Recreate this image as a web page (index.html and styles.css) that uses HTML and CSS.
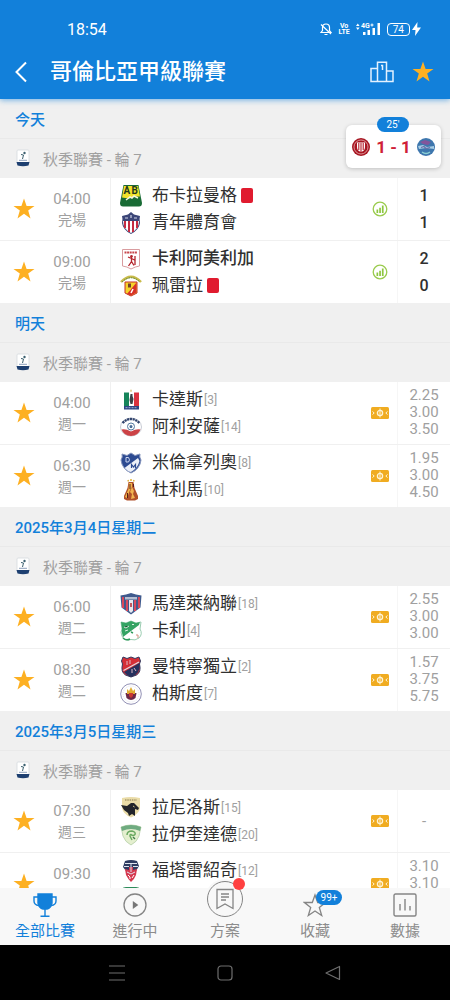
FILE: index.html
```html
<!DOCTYPE html>
<html lang="zh-TW">
<head>
    <meta charset="UTF-8">
    <meta name="viewport" content="width=device-width, initial-scale=1.0">
    <title>哥倫比亞甲級聯賽</title>
    <link rel="stylesheet" href="styles.css">
</head>
<body>
    <!-- Iconos compartidos -->
    <svg class="sprite" aria-hidden="true">
        <symbol id="star" viewBox="0 0 22 22">
            <path fill="#fdb022" d="M11 .5l2.600 7.400h7.900l-6.300 4.700 2.300 7.900L11 15.800l-6.500 4.700 2.300-7.900L.5 7.900h7.900z"/>
        </symbol>
        <symbol id="league" viewBox="0 0 16 18">
            <rect x="2" y="1" width="12" height="13" rx="1" fill="#fff" stroke="#d4d9dd" stroke-width=".8"/>
            <circle cx="9.500" cy="4" r="1.200" fill="#3c6170"/>
            <path d="M6 5.500l2.500.5-1 4" fill="none" stroke="#3c6170"/>
            <path d="M1.500 13h13l-1 3.500q-5.500 1.400-11 0z" fill="#1d3f70"/>
            <path d="M4 11.300h8" stroke="#6f86a8" stroke-width=".8"/>
        </symbol>
        <symbol id="stats" viewBox="0 0 16 16">
            <circle cx="8" cy="8" r="6.800" fill="none" stroke="#9acb4d" stroke-width="1.300"/>
            <path d="M4.500 8.500h1.700V12H4.500zM7.200 6.800h1.700V12H7.200zM9.900 4.500h1.700V12H9.900z" fill="#8dc63f"/>
        </symbol>
        <symbol id="field" viewBox="0 0 18 14">
            <rect x="0" y="1" width="18" height="12" rx="1.500" fill="#f0ac21"/>
            <circle cx="9" cy="7" r="2.600" fill="none" stroke="#fff4d6" stroke-width="1.300"/>
            <path d="M9 2.500v9M1.500 5.500L3.200 7 1.500 8.500M16.500 5.500L14.800 7l1.700 1.500" fill="none" stroke="#fff4d6"/>
        </symbol>
    </svg>

    <header class="header">
        <div class="status-bar">
            <span class="clock">18:54</span>
            <div class="status-icons">
                <svg width="12" height="14" viewBox="0 0 12 14" fill="none" stroke="#fff" stroke-width="1.200">
                    <path d="M1 10.500h10L9.500 8.500V5.500a3.500 3.500 0 0 0-7 0v3zM4.500 12.500h3M1 2.500l10 9.500"/>
                </svg>
                <span class="volte"><span>Vo</span><span>LTE</span></span>
                <svg width="25" height="14" viewBox="0 0 25 14" fill="#fff">
                    <path d="M0 4l1.800-2.500L3.600 4zM0 5.500h3.600L1.800 8z"/>
                    <text x="5" y="6" font-size="7" font-weight="700">4G</text>
                    <path d="M14.500 2.500h3v1h-3zM15.500 1.500h1v3h-1z"/>
                    <path d="M7 10h2.500v3H7zM11.500 8h2.500v5h-2.500zM16.500 6H19v7h-2.500zM21.500 1H24v12h-2.500z"/>
                </svg>
                <span class="battery">74</span>
                <svg width="9" height="14" viewBox="0 0 9 14" fill="#fff">
                    <path d="M5.500 0L0 8h3.500L3 14l6-8.500H5.200z"/>
                </svg>
            </div>
        </div>
        <div class="title-bar">
            <button class="icon-button back" aria-label="返回">
                <svg width="14" height="22" viewBox="0 0 14 22" fill="none" stroke="#fff" stroke-width="2">
                    <path d="M12 1.500L2.500 11 12 20.500"/>
                </svg>
            </button>
            <h1>哥倫比亞甲級聯賽</h1>
            <button class="icon-button" aria-label="排名">
                <svg width="24" height="22" viewBox="0 0 24 22" fill="none" stroke="#e3f1ff" stroke-width="1.500">
                    <path d="M7.500 20.500V1.200h9v19.300M7.500 7.500H1v13h22V10h-6.500M11 4.500h1.500V9"/>
                </svg>
            </button>
            <button class="icon-button" aria-label="收藏">
                <svg width="22" height="22"><use href="#star"/></svg>
            </button>
        </div>
    </header>

    <main class="content">
        <a href="#" class="live-card">
            <span class="live-minute">25'</span>
            <svg width="18" height="18" viewBox="0 0 18 18">
                <circle cx="9" cy="9" r="9" fill="#a71622"/>
                <circle cx="9" cy="9" r="7" fill="none" stroke="#e9b4b4" stroke-width=".8"/>
                <path d="M5 4.500h8V9q0 4-4 5-4-1-4-5z" fill="#fff"/>
                <path d="M6.800 5v7M9 5v9M11.200 5v7" stroke="#b81d2a" stroke-width="1.100"/>
            </svg>
            <span class="live-score">1 - 1</span>
            <svg width="18" height="18" viewBox="0 0 18 18">
                <circle cx="9" cy="9" r="9" fill="#3e77ae"/>
                <path d="M3 4l5-2 6 2-3 3-5-1z" fill="#83559b"/>
                <path d="M1 8l5-1 4 2 7-1v3l-8-1-7 1z" fill="#a7cde5"/>
                <path d="M4 9.500l3-1 2 2 4-1" fill="none" stroke="#6a6fa8" stroke-width="1.200"/>
                <path d="M5 14q4 3 8 0" fill="none" stroke="#8bd0d4" stroke-width="1.500"/>
            </svg>
        </a>

        <section>
            <h2 class="date">今天</h2>
            <h3 class="league"><svg width="16" height="18"><use href="#league"/></svg>秋季聯賽 - 輪 7</h3>
            <div class="match">
                <button class="favorite" aria-label="收藏"><svg width="22" height="22"><use href="#star"/></svg></button>
                <div class="time"><span>04:00</span><span class="day">完場</span></div>
                <div class="teams">
                    <div class="team">
                        <svg width="22" height="22" viewBox="0 0 22 22">
                            <path d="M3.500 0h15L22 18q0 3.500-3 3.500H3q-3 0-3-3.500z" fill="#196b35"/>
                            <path d="M4 1h14l2 10.500q-3 0-5 0L9 13.500l-7-1z" fill="#f3e32b"/>
                            <path d="M6 15l4-3 2 1 2-2 4 2" fill="none" stroke="#f4f5e0" stroke-width="1.500"/>
                            <text x="3.500" y="9" font-size="10" font-weight="700" fill="#24391d">A</text>
                            <text x="11.500" y="9" font-size="10" font-weight="700" fill="#24391d">B</text>
                        </svg>
                        <span class="name">布卡拉曼格</span><i class="red-card"></i>
                    </div>
                    <div class="team">
                        <svg width="22" height="22" viewBox="0 0 22 22">
                            <path d="M11 0l3 2.500L20 4q-1 3 0 7-1 7-9 11-8-4-9-11 1-4 0-7l6-1.500z" fill="#3c4678"/>
                            <path d="M3 9h16q0 8-8 12-8-4-8-12z" fill="#fff"/>
                            <path d="M5 9v7M9 9v11M13 9v11M17 9v7" stroke="#c52c43" stroke-width="2"/>
                            <path d="M5 6h3M14 6h3M11 3v3" stroke="#d2d6e8" stroke-width="1.200"/>
                        </svg>
                        <span class="name">青年體育會</span>
                    </div>
                </div>
                <div class="info"><svg width="16" height="16"><use href="#stats"/></svg></div>
                <div class="score"><span>1</span><span>1</span></div>
            </div>
            <div class="match">
                <button class="favorite" aria-label="收藏"><svg width="22" height="22"><use href="#star"/></svg></button>
                <div class="time"><span>09:00</span><span class="day">完場</span></div>
                <div class="teams">
                    <div class="team">
                        <svg width="22" height="22" viewBox="0 0 22 22">
                            <path d="M2.500 1.500h17V18q-4 .5-8.500 3-4-2.500-8.500-3z" fill="#fff" stroke="#d99c9f"/>
                            <path d="M4.500 4.500h13" stroke="#c7484d" stroke-width="2" stroke-dasharray="2 .6"/>
                            <circle cx="11.500" cy="8.200" r="1.300" fill="#b3242b"/>
                            <path d="M11.500 9v4.500l-3 4.500M11.500 13.500l2.500 4M8 9l3.500 1.500 3 1.500M15 8v9" fill="none" stroke="#b3242b" stroke-width="1.300"/>
                        </svg>
                        <span class="name winner">卡利阿美利加</span>
                    </div>
                    <div class="team">
                        <svg width="22" height="22" viewBox="0 0 22 22">
                            <path d="M1 7Q11-3.500 21 7" fill="none" stroke="#c9bb4a" stroke-width="2.500"/>
                            <path d="M2 7Q11-1.500 20 7" fill="none" stroke="#56823a" stroke-dasharray="1.500 1"/>
                            <path d="M5 7h12v11l-6 3-6-3z" fill="#f5d32a" stroke="#c43227"/>
                            <path d="M16.500 7.500L7 19l4 1.500 5.500-3z" fill="#d83127"/>
                            <path d="M8 8.500h3v4H8z" fill="#74402b"/>
                            <path d="M13 14l-2 4" stroke="#fff" stroke-width="1.500"/>
                        </svg>
                        <span class="name">珮雷拉</span><i class="red-card"></i>
                    </div>
                </div>
                <div class="info"><svg width="16" height="16"><use href="#stats"/></svg></div>
                <div class="score"><span>2</span><span>0</span></div>
            </div>
        </section>

        <section>
            <h2 class="date">明天</h2>
            <h3 class="league"><svg width="16" height="18"><use href="#league"/></svg>秋季聯賽 - 輪 7</h3>
            <div class="match">
                <button class="favorite" aria-label="收藏"><svg width="22" height="22"><use href="#star"/></svg></button>
                <div class="time"><span>04:00</span><span class="day">週一</span></div>
                <div class="teams">
                    <div class="team">
                        <svg width="22" height="22" viewBox="0 0 22 22">
                            <path d="M11 0l1 2.500h-2z" fill="#d6b65a"/>
                            <path d="M4 3.500h5V17H4z" fill="#16845a"/>
                            <path d="M9 3.500h5V17H9z" fill="#fff"/>
                            <path d="M14 3.500h5V17h-5z" fill="#d9333f"/>
                            <path d="M10.500 5h2v2l1 3-1 5h-2l-1-4z" fill="#3b4146"/>
                            <path d="M4 17h15v3.500H4z" fill="#2d4684"/>
                            <path d="M5.500 18.700h12" stroke="#9faed0" stroke-dasharray="2 1"/>
                        </svg>
                        <span class="name">卡達斯</span><span class="rank">[3]</span>
                    </div>
                    <div class="team">
                        <svg width="22" height="22" viewBox="0 0 22 22">
                            <ellipse cx="11" cy="11" rx="10.500" ry="9" fill="#fff" stroke="#c9ccd5"/>
                            <path d="M2.500 7q8.500-8 17 0" fill="none" stroke="#31446e" stroke-width="2.300" stroke-dasharray="2.200 .6"/>
                            <path d="M1.500 13.500q4-1 9.500 2 5.500-3 9.500-2Q18 20 11 20t-9.500-6.500z" fill="#cc4246"/>
                            <circle cx="11" cy="10.500" r="3.500" fill="#fff" stroke="#54799f"/>
                            <path d="M11 8.800l1.600 1.200-.6 2h-2l-.6-2z" fill="#4a6e98"/>
                        </svg>
                        <span class="name">阿利安薩</span><span class="rank">[14]</span>
                    </div>
                </div>
                <div class="info"><svg width="18" height="14"><use href="#field"/></svg></div>
                <div class="odds"><span>2.25</span><span>3.00</span><span>3.50</span></div>
            </div>
            <div class="match">
                <button class="favorite" aria-label="收藏"><svg width="22" height="22"><use href="#star"/></svg></button>
                <div class="time"><span>06:30</span><span class="day">週一</span></div>
                <div class="teams">
                    <div class="team">
                        <svg width="22" height="22" viewBox="0 0 22 22">
                            <path d="M2 2l5 1.500L11 1l4 2.500L20 2q-1 3 1 6-1 9-10 13Q2 17 1 8q2-3 1-6z" fill="#2c4a91" stroke="#8393bb"/>
                            <path d="M18 6L4.500 16l3.500 3q2 1 3 1 7-4 8.500-11z" fill="#eceff7"/>
                            <path d="M6 10V5.500h2.500q2 2.500 0 4.500z" fill="none" stroke="#cad4ee"/>
                            <path d="M11.500 16v-3.500l2 2.500 2-2.500V16" fill="none" stroke="#2c4a91" stroke-width="1.200"/>
                        </svg>
                        <span class="name">米倫拿列奧</span><span class="rank">[8]</span>
                    </div>
                    <div class="team">
                        <svg width="22" height="22" viewBox="0 0 22 22">
                            <path d="M8 1l.5 1.500M11 0v2M14 1l-.5 1.500" stroke="#e1b23c" stroke-width="1.500"/>
                            <path d="M8.500 3h5l1 6 3.500 8v3l-3 1.500H7L4 20v-3l3.500-8z" fill="#b0502a"/>
                            <path d="M9 4h3v4l-2 3-3 8-2-1 3.500-8z" fill="#f0b54a"/>
                            <path d="M12 8l2 4-1 3 2 4-4 1 1-5-2-2z" fill="#f0b350"/>
                            <path d="M10 5v5M13.500 5v3M7.500 14v5" stroke="#562019"/>
                        </svg>
                        <span class="name">杜利馬</span><span class="rank">[10]</span>
                    </div>
                </div>
                <div class="info"><svg width="18" height="14"><use href="#field"/></svg></div>
                <div class="odds"><span>1.95</span><span>3.00</span><span>4.50</span></div>
            </div>
        </section>

        <section>
            <h2 class="date">2025年3月4日星期二</h2>
            <h3 class="league"><svg width="16" height="18"><use href="#league"/></svg>秋季聯賽 - 輪 7</h3>
            <div class="match">
                <button class="favorite" aria-label="收藏"><svg width="22" height="22"><use href="#star"/></svg></button>
                <div class="time"><span>06:00</span><span class="day">週二</span></div>
                <div class="teams">
                    <div class="team">
                        <svg width="22" height="22" viewBox="0 0 22 22">
                            <path d="M.5 2.500L6 1.500 11 0l5 1.500 5.500 1-1 12L11 21.500 1.500 14.500z" fill="#405a8d"/>
                            <path d="M3 4v11M7 7v11M15 7v11M19 4v11" stroke="#d4485c" stroke-width="2"/>
                            <path d="M5 4h12v2.500H5z" fill="#b5bed1"/>
                            <path d="M9 7h4v11l-2 2-2-2z" fill="#e8e9ef"/>
                            <path d="M10 10h2v4h-2z" fill="#c05761"/>
                        </svg>
                        <span class="name">馬達萊納聯</span><span class="rank">[18]</span>
                    </div>
                    <div class="team">
                        <svg width="22" height="22" viewBox="0 0 22 22">
                            <path d="M1 2l5 1 5-2 5 2 5-1-1 7q3 5-1 9-4 3-8 1.500-7 2-9-3.500-2-4 0-7z" fill="#fff" stroke="#9accb1"/>
                            <path d="M1 2l5 1 5-2 5 2 4-1-1 3L3 17q-2-5-1-9z" fill="#34a363"/>
                            <path d="M4 7l2 1 3-2M12 4.500h2M8 10l-3 1" stroke="#d9f0e1"/>
                            <path d="M11 12l2 1M3 18q3 3 7 1" fill="none" stroke="#319b5d" stroke-width="1.500"/>
                            <path d="M16 15h2v3" fill="none" stroke="#d58e80"/>
                        </svg>
                        <span class="name">卡利</span><span class="rank">[4]</span>
                    </div>
                </div>
                <div class="info"><svg width="18" height="14"><use href="#field"/></svg></div>
                <div class="odds"><span>2.55</span><span>3.00</span><span>3.00</span></div>
            </div>
            <div class="match">
                <button class="favorite" aria-label="收藏"><svg width="22" height="22"><use href="#star"/></svg></button>
                <div class="time"><span>08:30</span><span class="day">週二</span></div>
                <div class="teams">
                    <div class="team">
                        <svg width="22" height="22" viewBox="0 0 22 22">
                            <path d="M3 1l4 1.500L11 1l4 1.500L19 1l1.500 4-1 3q2 8-3 11L11 21l-5.500-2q-5-3-3-11l-1-3z" fill="#d52f37" stroke="#31395f"/>
                            <path d="M19.500 7L4 16q2 3 7 5 10-3 8.500-14z" fill="#26315e"/>
                            <path d="M3.500 14.500L19 6" stroke="#e6dbe1" stroke-width="1.200"/>
                            <path d="M7 5v4M10 4v4M12 13v4M14 12l2 3" stroke="#e0b9c4"/>
                        </svg>
                        <span class="name">曼特寧獨立</span><span class="rank">[2]</span>
                    </div>
                    <div class="team">
                        <svg width="22" height="22" viewBox="0 0 22 22">
                            <circle cx="11" cy="11" r="10.300" fill="#fff" stroke="#9291b5"/>
                            <circle cx="11" cy="11" r="8" fill="none" stroke="#e2e2ec" stroke-dasharray="1 1"/>
                            <path d="M5.500 10h11l-1 5q-4.500 4-9 0z" fill="#6c2847"/>
                            <path d="M7 6l2 2 2-4 2 4 2-2v5H7z" fill="#e0ad34"/>
                            <path d="M9 10h4v3l-2 2-2-2z" fill="#c93832"/>
                        </svg>
                        <span class="name">柏斯度</span><span class="rank">[7]</span>
                    </div>
                </div>
                <div class="info"><svg width="18" height="14"><use href="#field"/></svg></div>
                <div class="odds"><span>1.57</span><span>3.75</span><span>5.75</span></div>
            </div>
        </section>

        <section>
            <h2 class="date">2025年3月5日星期三</h2>
            <h3 class="league"><svg width="16" height="18"><use href="#league"/></svg>秋季聯賽 - 輪 7</h3>
            <div class="match">
                <button class="favorite" aria-label="收藏"><svg width="22" height="22"><use href="#star"/></svg></button>
                <div class="time"><span>07:30</span><span class="day">週三</span></div>
                <div class="teams">
                    <div class="team">
                        <svg width="22" height="22" viewBox="0 0 22 22">
                            <path d="M2 1q9-2 18 0v10q-1 6-9 9.500-8-3.500-9-9.500z" fill="#eadca8"/>
                            <path d="M5 3h12" stroke="#887b50" stroke-dasharray="1.500 .8"/>
                            <path d="M1 8l6 1 4-3 3 0 1 1 4 4-1 2-3-1v7l-3-2-3 2-1-3-4-3z" fill="#22242a"/>
                            <path d="M13 9l1.500 1" stroke="#d9c889"/>
                        </svg>
                        <span class="name">拉尼洛斯</span><span class="rank">[15]</span>
                    </div>
                    <div class="team">
                        <svg width="22" height="22" viewBox="0 0 22 22">
                            <path d="M1 3q10-4 20 0-1 4-2 9-2 6-8 9-6-3-8-9-1-5-2-9z" fill="#e4efcf" stroke="#c1d7b3"/>
                            <path d="M1 3q10-4 20 0l-1 4Q11 3 2 7z" fill="#6fab80"/>
                            <path d="M7 11q0-4 5-4 4 1 3 3.500-2 2-4 0-1-.5-1 1.500l2 4" fill="none" stroke="#6aa961" stroke-width="1.500"/>
                            <path d="M13 13l2 2" stroke="#417f4b" stroke-width="1.500"/>
                        </svg>
                        <span class="name">拉伊奎達德</span><span class="rank">[20]</span>
                    </div>
                </div>
                <div class="info"><svg width="18" height="14"><use href="#field"/></svg></div>
                <div class="odds empty"><span>-</span></div>
            </div>
            <div class="match">
                <button class="favorite" aria-label="收藏"><svg width="22" height="22"><use href="#star"/></svg></button>
                <div class="time"><span>09:30</span></div>
                <div class="teams">
                    <div class="team">
                        <svg width="22" height="22" viewBox="0 0 22 22">
                            <path d="M5 1q6-2 12 0l2 5-3 5H6L3 7z" fill="#2d3b60"/>
                            <path d="M5 9l4 1V7h4v3l4-1-1 6q-2 5-5 7-3-3-5-7z" fill="#d63950"/>
                            <path d="M5 3.500h12M4 6.500h5M13 6.500h5M11 4v8M7 12l4 2 4-2" fill="none" stroke="#dfe3ed"/>
                            <path d="M8 15l2 2v2M14 15l-2 3" fill="none" stroke="#fff"/>
                        </svg>
                        <span class="name">福塔雷紹奇</span><span class="rank">[12]</span>
                    </div>
                    <div class="team">
                        <svg width="22" height="22" viewBox="0 0 22 22">
                            <path d="M4 1.500q7-2 14 0v13l-7 6-7-6z" fill="#fff" stroke="#2e8c5b" stroke-width="2"/>
                        </svg>
                    </div>
                </div>
                <div class="info"><svg width="18" height="14"><use href="#field"/></svg></div>
                <div class="odds"><span>3.10</span><span>3.10</span></div>
            </div>
        </section>
    </main>

    <nav class="tab-bar">
        <a href="#" class="tab active">
            <svg width="24" height="24" viewBox="0 0 24 24" fill="none" stroke="#1280da" stroke-width="1.400">
                <path d="M5 1h14v9q-1 5-5 6h-4q-4-1-5-6z" fill="#1280da"/>
                <path d="M5 4H1v4q0 4 5 4.500M19 4h4v4q0 4-5 4.500M12 16v7M7.500 23.200h9"/>
            </svg>
            <span>全部比賽</span>
        </a>
        <a href="#" class="tab">
            <svg width="24" height="24" viewBox="0 0 24 24">
                <circle cx="12" cy="12" r="11" fill="none" stroke="#858585" stroke-width="1.300"/>
                <path d="M9.800 8l5.500 4-5.500 4z" fill="#777"/>
            </svg>
            <span>進行中</span>
        </a>
        <a href="#" class="tab">
            <span class="plan-icon">
                <svg width="20" height="22" viewBox="0 0 20 22" fill="none" stroke="#858585" stroke-width="1.300">
                    <path d="M2 1.500h16v19l-8-4.500-8 4.500zM6 6h8M6 9h8M6 12h5"/>
                </svg>
                <i class="dot"></i>
            </span>
            <span>方案</span>
        </a>
        <a href="#" class="tab">
            <svg width="24" height="24" viewBox="0 0 24 24" fill="none" stroke="#858585" stroke-width="1.300">
                <path d="M12 2l2.700 7.500H22.500l-6.200 5 2.400 8L12 18l-6.700 4.500 2.400-8-6.200-5h7.800z"/>
            </svg>
            <span class="count">99+</span>
            <span>收藏</span>
        </a>
        <a href="#" class="tab">
            <svg width="24" height="24" viewBox="0 0 24 24" fill="none" stroke="#858585" stroke-width="1.400">
                <rect x="1" y="1" width="22" height="22" rx="1.500"/>
                <path d="M7 11v6.500M12 6v11.500M17 13v4.500"/>
            </svg>
            <span>數據</span>
        </a>
    </nav>

    <div class="system-bar">
        <button class="icon-button" aria-label="選單">
            <svg width="16" height="16" viewBox="0 0 16 16" stroke="#6e6e6e" stroke-width="1.200"><path d="M0 1h16M0 8h16M0 15h16"/></svg>
        </button>
        <button class="icon-button" aria-label="主畫面">
            <svg width="16" height="16" viewBox="0 0 16 16" fill="none" stroke="#6e6e6e" stroke-width="1.200"><rect x="1" y="1" width="14" height="14" rx="3"/></svg>
        </button>
        <button class="icon-button" aria-label="上一頁">
            <svg width="16" height="16" viewBox="0 0 16 16" fill="none" stroke="#6e6e6e" stroke-width="1.200"><path d="M14.500 1.500v13L1 8z" stroke-linejoin="round"/></svg>
        </button>
    </div>
</body>
</html>
```

FILE: styles.css
```css
body {
    font-family: Roboto, "Noto Sans CJK TC", sans-serif;
    background-color: #fff;
    margin: 0;
    height: 100vh;
    display: flex;
    flex-direction: column;
    overflow: hidden;
}

svg {
    flex-shrink: 0;
    display: block;
}

.sprite {
    position: absolute;
    width: 0;
    height: 0;
}

.icon-button,
.favorite {
    background: none;
    border: none;
    padding: 0;
    cursor: pointer;
    display: flex;
    align-items: center;
    justify-content: center;
}

/* Cabecera */
.header {
    background-color: #1280da;
    color: #fff;
    box-shadow: 0 1px 6px rgba(18, 128, 218, 0.6);
    position: relative;
    z-index: 2;
}

.status-bar {
    display: flex;
    justify-content: space-between;
    align-items: center;
    padding: 12px 29px 0 67px;
    height: 34px;
}

.clock {
    font-size: 16px;
}

.status-icons {
    display: flex;
    align-items: center;
    gap: 6px;
}

.volte {
    display: flex;
    flex-direction: column;
    align-items: center;
    font-size: 7px;
    line-height: 6px;
    font-weight: 700;
}

.battery {
    border: 1px solid #fff;
    border-radius: 4px;
    font-size: 10px;
    line-height: 11px;
    padding: 0 5px;
    margin-right: -4px;
}

.title-bar {
    display: flex;
    align-items: center;
    gap: 18px;
    padding: 0 16px 2px 14px;
    height: 51px;
}

.title-bar h1 {
    flex: 1;
    margin: 0;
    padding-left: 4px;
    font-size: 22px;
    line-height: 28px;
    font-weight: 500;
}

/* Lista de partidos */
.content {
    flex: 1;
    min-height: 0;
    overflow-y: auto;
    scrollbar-width: none;
    position: relative;
}

.date,
.league {
    margin: 0;
    box-sizing: border-box;
    background-color: #f0f0f0;
    font-size: 15px;
    display: flex;
    align-items: center;
}

.date {
    height: 40px;
    padding: 0 15px;
    color: #1280da;
    font-weight: 500;
    border-bottom: 1px solid #e9e9e9;
}

.league {
    height: 39px;
    padding: 0 15px 1px;
    gap: 12px;
    color: #a0a0a0;
    font-weight: 400;
}

.match {
    display: flex;
    min-height: 62px;
}

.match + .match {
    border-top: 1px solid #f0f0f0;
}

.favorite {
    width: 48px;
}

.time {
    width: 48px;
    padding: 11px 14px 0 0;
    display: flex;
    flex-direction: column;
    align-items: center;
    color: #a0a0a0;
    font-size: 15px;
    line-height: 21px;
    border-right: 1px solid #f0f0f0;
}

.day {
    font-size: 14px;
}

.teams {
    flex: 1;
    padding: 4px 0 0 9px;
}

.team {
    display: flex;
    align-items: center;
    height: 27px;
}

.name {
    margin-left: 10px;
    font-size: 17px;
    line-height: 27px;
    color: #303030;
}

.winner {
    font-weight: 500;
}

.rank {
    margin-left: 1px;
    font-size: 12px;
    color: #a0a0a0;
}

.red-card {
    width: 12px;
    height: 15px;
    margin-left: 4px;
    border-radius: 2px;
    background-color: #e01b2f;
}

.info {
    width: 35px;
    display: flex;
    align-items: center;
    justify-content: center;
    border-right: 1px solid #f6f6f6;
}

.score,
.odds {
    width: 52px;
    box-sizing: border-box;
    display: flex;
    flex-direction: column;
    align-items: center;
}

.score {
    padding-top: 4px;
    font-size: 16px;
    font-weight: 500;
    line-height: 27px;
    color: #303030;
}

.odds {
    padding-top: 5px;
    font-size: 15px;
    line-height: 17px;
    color: #a0a0a0;
}

.empty {
    padding-top: 0;
    justify-content: center;
}

/* Marcador en vivo */
.live-card {
    position: absolute;
    top: 26px;
    right: 9px;
    width: 95px;
    height: 43px;
    box-sizing: border-box;
    padding: 0 6px;
    display: flex;
    align-items: center;
    justify-content: space-between;
    background-color: #fff;
    border-radius: 6px;
    box-shadow: 0 1px 4px rgba(0, 0, 0, 0.2);
    text-decoration: none;
}

.live-minute {
    position: absolute;
    top: -8px;
    left: 31px;
    width: 32px;
    border-radius: 8px;
    background-color: #1280da;
    color: #fff;
    font-size: 10px;
    line-height: 15px;
    text-align: center;
}

.live-score {
    font-size: 17px;
    font-weight: 700;
    color: #cf2037;
}

/* Menú inferior */
.tab-bar {
    display: flex;
    height: 57px;
    background-color: #f8f8f8;
    position: relative;
    z-index: 1;
}

.tab {
    flex: 1;
    display: flex;
    flex-direction: column;
    align-items: center;
    justify-content: flex-end;
    gap: 4px;
    padding-bottom: 3px;
    position: relative;
    color: #8c8c8c;
    font-size: 15px;
    line-height: 21px;
    text-decoration: none;
}

.active {
    color: #1280da;
}

.plan-icon {
    position: relative;
    flex-shrink: 0;
    display: flex;
    align-items: center;
    justify-content: center;
    width: 34px;
    height: 34px;
    border: 1px solid #858585;
    border-radius: 50%;
    background-color: #f8f8f8;
    box-shadow: 0 0 0 2px #f8f8f8;
}

.dot {
    position: absolute;
    top: -4px;
    right: -3px;
    width: 12px;
    height: 12px;
    border-radius: 50%;
    background-color: #ff4040;
}

.count {
    position: absolute;
    top: 2px;
    left: 50%;
    margin-left: 1px;
    width: 26px;
    border-radius: 8px;
    background-color: #1280da;
    color: #fff;
    font-size: 10px;
    line-height: 15px;
    text-align: center;
}

.system-bar {
    display: flex;
    justify-content: center;
    gap: 92px;
    height: 55px;
    background-color: #000;
}
```
